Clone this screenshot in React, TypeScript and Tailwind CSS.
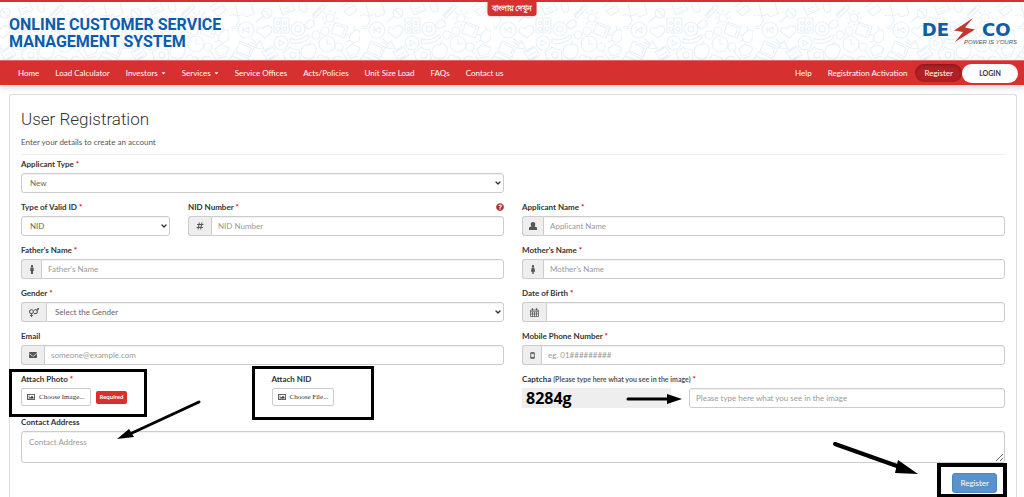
import React from "react";
import { ChevronDown } from "lucide-react";
import {
  FaCaretDown,
  FaEnvelope,
  FaFemale,
  FaHashtag,
  FaMale,
  FaQuestionCircle,
  FaRegImage,
  FaVenusMars,
} from "react-icons/fa";

const leftLinks = [
  { label: "Home" },
  { label: "Load Calculator" },
  { label: "Investors", caret: true },
  { label: "Services", caret: true },
  { label: "Service Offices" },
  { label: "Acts/Policies" },
  { label: "Unit Size Load" },
  { label: "FAQs" },
  { label: "Contact us" },
];

const CalendarIcon = () => (
  <svg viewBox="0 0 18 18" className="h-[9px] w-[9px]" fill="none" stroke="currentColor" strokeWidth="1.5">
    <path d="M1 4h16v13H1zM1 7.5h16M1 12h16M5 7.5V17M9 7.5V17M13 7.5V17" />
    <path d="M5 0.5v4.5M13 0.5v4.5" strokeWidth="2.5" />
  </svg>
);

const PhoneIcon = () => (
  <svg viewBox="0 0 10 16" className="h-[7px] w-[5px]" fill="none" stroke="currentColor" strokeWidth="2">
    <rect x="1" y="1" width="8" height="14" rx="1" />
    <path d="M1 3h8M1 12.5h8" />
  </svg>
);

const UserIcon = () => (
  <svg viewBox="0 0 16 16" className="h-2 w-2" fill="currentColor">
    <path d="M8 0c2.800 0 4.500 1.800 4.500 4.500 0 2-.8 3.500-1.500 4.300l3.500 1.200c1 .4 1.500 1.200 1.500 2.200V16H0v-3.800c0-1 .5-1.800 1.500-2.200L5 8.800C4.300 8 3.500 6.500 3.500 4.500 3.500 1.800 5.200 0 8 0z" />
  </svg>
);

const Doodles = () => (
  <svg className="absolute inset-0 h-full w-full" aria-hidden="true">
    <defs>
      <pattern id="doodles" width="131" height="60" patternUnits="userSpaceOnUse" patternTransform="translate(98 0)">
        <g fill="none" stroke="#e8f1f9" strokeWidth="1.2" strokeLinecap="round" strokeLinejoin="round">
          <path d="M6 2l3 12 6-2 2 3 8-3-3-11M0 14c5-3 10 0 10 5l-3 5-5 1M3 27l4-1" />
          <circle cx="38" cy="11" r="5" />
          <path d="M34 14l-7 6M35 8l6 6M50 3l4 10 12-5-4-7M55 7l5-2M56 10l5-2" />
          <path d="M70 2c0 6 3 9 6 8s2-6 0-9M83 13l9-9c3-3 6 1 3 3l-8 8c-2 2-4 0-2-2l7-7" />
          <rect x="45" y="16" width="15" height="15" rx="1" />
          <path d="M52 16v15" />
          <circle cx="49" cy="21" r="1.5" /><circle cx="56" cy="21" r="1.5" />
          <circle cx="49" cy="27" r="2" /><circle cx="56" cy="27" r="2" />
          <circle cx="69" cy="27" r="7" /><circle cx="69" cy="27" r="3" />
          <path d="M61 36c5 4 12 1 18-3 2 0 2 2 0 4-5 4-12 5-18 4z" />
          <circle cx="101" cy="16" r="4" />
          <path d="M101 8v2M101 22v2M93 16h2M107 16h2M95 10l2 2M105 20l2 2M95 22l2-2M105 12l2-2" />
          <circle cx="17" cy="28" r="8" />
          <path d="M14 25v6M20 25l-5 3 5 3z" />
          <path d="M36 36l-8-6c-1-5 4-6 6-3 2-5 8-4 9 0 0 4-3 6-7 9z" />
          <path d="M79 19c4-3 7 0 6 5l-6 3-4-4z" />
          <circle cx="87" cy="33" r="4" /><circle cx="96" cy="29" r="4" />
          <path d="M106 20l13 5-4 11-13-5zM108 23l8 3-3 7M112 5l8-5M115 9l10-6 3 5-8 6z" />
          <path d="M125 29c4-3 7 0 6 5s-4 8-8 6-3-8 2-11zM121 34l-4-2M121 38l-4 2M126 28l-1-4" />
          <circle cx="52" cy="41" r="7" />
          <path d="M50 38v6l5-3zM23 37l5 5 3-3 4 8-9-1 2-2-6-4" />
          <path d="M11 39l14 6-4 10-14-6zM5 50l15 7-2 3L3 54zM13 42l9 4-2 6" />
          <path d="M33 50l10-6 6 9-10 6zM36 50l6-4M38 54l6-4M40 57l6-4" />
          <path d="M54 50l4-2 3-3 3 2 6 1 1 10-14 2z" />
          <circle cx="64" cy="53" r="3" />
          <path d="M79 43c5-3 9 1 8 6s-4 9-8 8-8-3-7-8 4-7 7-6zm0 0l3-4" />
          <circle cx="98" cy="42" r="8" />
          <path d="M98 37v5h4" />
          <circle cx="110" cy="45" r="4" />
          <path d="M112 49l6 8M88 56c2-4 5-4 7-1 4-1 6 2 5 5M104 59c0-4 4-6 8-4" />
          <path d="M117 47l6-5 8 4-3 6-8 2zM121 56l8-2" />
          <path d="M0 58l4-5" />
        </g>
      </pattern>
    </defs>
    <rect width="100%" height="100%" fill="url(#doodles)" />
  </svg>
);

const Logo = () => (
  <svg viewBox="0 0 108 26" className="h-[26px] w-[108px]" role="img" aria-label="DESCO, power is yours">
    <g fontFamily="DejaVu Sans" fontWeight="700" fontSize="18" fill="#0d5ca6">
      <text x="40" y="18" textAnchor="end">DE</text>
      <text x="73" y="18">CO</text>
    </g>
    <path d="M64 0L45 12.500l9 1.500-8 10 20-12.500-10-2z" fill="#c0392f" />
    <text x="108" y="26" textAnchor="end" fontFamily="Liberation Sans" fontStyle="italic" fontSize="6" fill="#555">
      POWER IS YOURS
    </text>
  </svg>
);

const controlClass =
  "h-5 w-full min-w-0 border border-[#ccc] bg-white text-[8px] text-[#666] shadow-[inset_0_1px_1px_rgba(0,0,0,0.06)] placeholder:text-[#999] outline-none";

type FieldProps = {
  id: string;
  label: string;
  required?: boolean;
  className?: string;
  children: React.ReactNode;
};

const Field = ({ id, label, required, className = "", children }: FieldProps) => (
  <div className={`flex flex-col gap-[3px] ${className}`}>
    <label htmlFor={id} className="h-[10px] font-bold leading-[8px]">
      {label} {required && <span className="text-red-600">*</span>}
    </label>
    {children}
  </div>
);

const Addon = ({ icon, addon }: { icon: React.ReactNode; addon: string }) => (
  <span
    className={`flex h-5 shrink-0 items-center justify-center rounded-l-[3px] border border-r-0 border-[#ccc] bg-[#eee] text-[#555] ${addon}`}
  >
    {icon}
  </span>
);

type AddonInputProps = {
  id: string;
  icon: React.ReactNode;
  addon: string;
  placeholder?: string;
  type?: string;
};

const AddonInput = ({ id, icon, addon, placeholder, type = "text" }: AddonInputProps) => (
  <div className="flex">
    <Addon icon={icon} addon={addon} />
    <input id={id} type={type} placeholder={placeholder} className={`${controlClass} rounded-r-[3px] px-[6px]`} />
  </div>
);

const Select = ({ id, option, rounded = "rounded-[3px]" }: { id: string; option: string; rounded?: string }) => (
  <div className="relative w-full">
    <select id={id} className={`${controlClass} ${rounded} block appearance-none px-2`}>
      <option>{option}</option>
    </select>
    <ChevronDown strokeWidth={4} className="pointer-events-none absolute right-[2px] top-[6px] h-2 w-2 text-[#333]" />
  </div>
);

const fileButton =
  "flex h-[18px] items-center gap-1 rounded-[2px] border border-[#ccc] bg-white px-[5px] font-['Liberation_Serif',serif] text-[7px] text-[#333]";

const App = () => {
  return (
    <div className="w-full overflow-hidden bg-white font-[Lato,'Noto_Sans',sans-serif] text-[8px] leading-[12px] text-[#333]">
      <header className="relative flex h-[60px] items-center justify-between border-t-2 border-[#d63031] pl-[9px] pr-[7px]">
        <Doodles />
        <h1 className="relative pt-1 font-[Roboto,sans-serif] text-[16px] font-bold leading-[17px] text-[#0d5cab]">
          ONLINE CUSTOMER SERVICE
          <br />
          MANAGEMENT SYSTEM
        </h1>
        <a
          href="#"
          lang="bn"
          className="absolute left-1/2 top-0 h-[14px] -translate-x-1/2 rounded-b-[3px] bg-[#d63031] px-1 text-[8px] font-bold leading-[12px] text-white shadow"
        >
          বাংলায় দেখুন
        </a>
        <a href="#" className="relative">
          <Logo />
        </a>
      </header>

      <nav className="relative flex h-[25px] items-center justify-between border-t border-[#e06a6a] bg-[#d63031] pl-[10px] pr-[6px] text-white shadow-[0_2px_6px_rgba(0,0,0,0.2)]">
        <div className="flex items-center">
          {leftLinks.map((link) => (
            <a key={link.label} href="#" className="flex items-center gap-[3px] px-2">
              {link.label}
              {link.caret && <FaCaretDown className="h-[6px] w-[5px]" />}
            </a>
          ))}
        </div>
        <div className="flex items-center">
          <a href="#" className="px-2">Help</a>
          <a href="#" className="px-2">Registration Activation</a>
          <a
            href="#"
            className="flex h-[18px] items-center rounded-full bg-[#b02024] px-[9px] shadow-[inset_0_1px_3px_rgba(0,0,0,0.3)]"
          >
            Register
          </a>
          <a
            href="#"
            className="flex h-[19px] w-14 items-center justify-center rounded-full bg-white text-[7px] font-bold text-[#333]"
          >
            LOGIN
          </a>
        </div>
      </nav>

      <main className="ml-[9px] mr-[7px] mt-[9px] rounded-t-[3px] border border-b-0 border-[#ddd] px-[11px] pb-[5px] pt-[14px]">
        <h2 className="font-[Roboto,sans-serif] text-[17px] font-light leading-[20px]">User Registration</h2>
        <p className="mt-[7px] text-[#555]">Enter your details to create an account</p>
        <hr className="mb-[5px] mt-[6px] border-[#eee]" />

        <form className="flex flex-col gap-[10px]" onSubmit={(e) => e.preventDefault()}>
          <div className="grid grid-cols-2 gap-x-[18px]">
            <Field id="applicantType" label="Applicant Type" required>
              <Select id="applicantType" option="New" />
            </Field>
          </div>

          <div className="grid grid-cols-2 gap-x-[18px]">
            <div className="grid grid-cols-3 gap-x-[18px]">
              <Field id="idType" label="Type of Valid ID" required>
                <Select id="idType" option="NID" />
              </Field>
              <div className="relative col-span-2">
                <Field id="nid" label="NID Number" required>
                  <AddonInput id="nid" icon={<FaHashtag />} addon="w-[23px]" placeholder="NID Number" />
                </Field>
                <button type="button" aria-label="Help" className="absolute right-0 top-0 text-[#b03030]">
                  <FaQuestionCircle />
                </button>
              </div>
            </div>
            <Field id="applicantName" label="Applicant Name" required>
              <AddonInput id="applicantName" icon={<UserIcon />} addon="w-[21px]" placeholder="Applicant Name" />
            </Field>
          </div>

          <div className="grid grid-cols-2 gap-x-[18px]">
            <Field id="father" label="Father's Name" required>
              <AddonInput id="father" icon={<FaMale className="h-[9px]" />} addon="w-5" placeholder="Father's Name" />
            </Field>
            <Field id="mother" label="Mother's Name" required>
              <AddonInput id="mother" icon={<FaFemale className="h-[9px]" />} addon="w-[21px]" placeholder="Mother's Name" />
            </Field>
          </div>

          <div className="grid grid-cols-2 gap-x-[18px]">
            <Field id="gender" label="Gender" required>
              <div className="flex">
                <Addon icon={<FaVenusMars className="h-[9px] w-[10px]" />} addon="w-[25px]" />
                <Select id="gender" option="Select the Gender" rounded="rounded-r-[3px]" />
              </div>
            </Field>
            <Field id="dob" label="Date of Birth" required>
              <AddonInput id="dob" icon={<CalendarIcon />} addon="w-[24px]" />
            </Field>
          </div>

          <div className="grid grid-cols-2 gap-x-[18px]">
            <Field id="email" label="Email">
              <AddonInput id="email" type="email" icon={<FaEnvelope />} addon="w-[23px]" placeholder="someone@example.com" />
            </Field>
            <Field id="mobile" label="Mobile Phone Number" required>
              <AddonInput id="mobile" type="tel" icon={<PhoneIcon />} addon="w-[19px]" placeholder="eg. 01#########" />
            </Field>
          </div>

          <div className="grid grid-cols-2 gap-x-[18px]">
            <div className="grid grid-cols-2 gap-x-[18px]">
              <div className="relative">
                <Field id="photo" label="Attach Photo" required>
                  <div className="flex items-center gap-[5px]">
                    <button id="photo" type="button" className={fileButton}>
                      <FaRegImage className="h-2 w-2" />
                      Choose Image...
                    </button>
                    <span className="flex h-[13px] items-center rounded-[2px] bg-[#d9302f] px-1 text-[6px] font-bold text-white">
                      Required
                    </span>
                  </div>
                </Field>
                <div className="pointer-events-none absolute -left-3 -top-[6px] h-12 w-[138px] border-[3px] border-black" />
                <svg
                  className="pointer-events-none absolute left-[96px] top-6 h-11 w-[90px]"
                  viewBox="0 0 90 44"
                  aria-hidden="true"
                >
                  <path d="M82 3L15 34" stroke="#000" strokeWidth="3" strokeLinecap="round" />
                  <path d="M0 40L12 30l5 8z" fill="#000" />
                </svg>
              </div>
              <div className="relative">
                <Field id="nidFile" label="Attach NID" className="items-start">
                  <button id="nidFile" type="button" className={fileButton}>
                    <FaRegImage className="h-2 w-2" />
                    Choose File...
                  </button>
                </Field>
                <div className="pointer-events-none absolute -left-5 -top-[9px] h-[54px] w-[122px] border-[3px] border-black" />
              </div>
            </div>
            <div className="flex flex-col gap-[3px]">
              <label htmlFor="captcha" className="h-[10px] font-bold leading-[8px]">
                Captcha <span className="text-[7px] text-[#555]">(Please type here what you see in the image)</span>{" "}
                <span className="text-red-600">*</span>
              </label>
              <div className="grid grid-cols-3 gap-x-[18px]">
                <div className="relative flex h-5 items-center bg-[#eee] pl-1 font-['Open_Sans',sans-serif] text-[16px] font-bold text-black">
                  8284g
                  <svg className="absolute -right-3 top-1 h-3 w-[58px]" viewBox="0 0 58 12" aria-hidden="true">
                    <path d="M3 7h40" stroke="#000" strokeWidth="3" strokeLinecap="round" />
                    <path d="M42 2l15 5-15 5z" fill="#000" />
                  </svg>
                </div>
                <input
                  id="captcha"
                  type="text"
                  placeholder="Please type here what you see in the image"
                  className={`${controlClass} col-span-2 rounded-[3px] px-[6px]`}
                />
              </div>
            </div>
          </div>

          <Field id="address" label="Contact Address">
            <textarea
              id="address"
              placeholder="Contact Address"
              className={`${controlClass} block h-8 resize rounded-[3px] px-[7px] py-1`}
            />
          </Field>

          <div className="relative flex justify-end pr-2">
            <button type="submit" className="h-5 rounded-[3px] border border-[#4a86c0] bg-[#5b92cb] px-[7px] text-white">
              Register
            </button>
            <div className="pointer-events-none absolute -right-[2px] -top-[10px] h-[35px] w-[70px] border-4 border-black" />
            <svg
              className="pointer-events-none absolute -top-8 right-[86px] h-9 w-[88px]"
              viewBox="0 0 88 36"
              aria-hidden="true"
            >
              <path d="M4 3L66 25" stroke="#000" strokeWidth="4" strokeLinecap="round" />
              <path d="M67 19L87 33l-23-1z" fill="#000" />
            </svg>
          </div>
        </form>
      </main>
    </div>
  );
};

export default App;
